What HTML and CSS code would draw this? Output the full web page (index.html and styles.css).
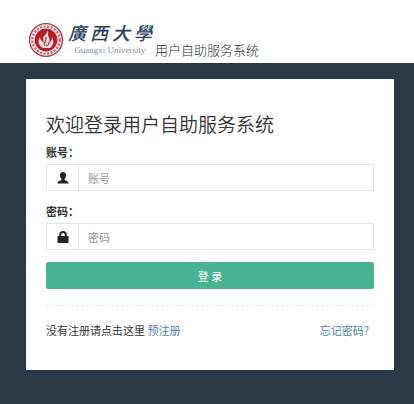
FILE: index.html
```html
<!DOCTYPE html>
<html lang="zh-CN">
<head>
  <meta charset="UTF-8">
  <meta name="viewport" content="width=device-width, initial-scale=1.0">
  <title>用户自助服务系统</title>
  <link rel="stylesheet" href="styles.css">
</head>
<body>
  <header class="header">
    <svg class="seal" viewBox="0 0 36 36" aria-hidden="true">
      <circle cx="18" cy="18" r="16.4" fill="#fff" stroke="#c0303a" stroke-width="1.4"/>
      <circle cx="18" cy="18" r="13.6" fill="none" stroke="#cf6068" stroke-width="2.4" stroke-dasharray="2.2 1.4"/>
      <circle cx="18" cy="18" r="11.4" fill="#b91c28"/>
      <path d="M19 8c2 3-4 5-4 9 0 2 1 3 2 4-3-1-5-3-5-6-3 5-1 9 3 11h7c4-3 4-7 2-11 0 3-1 5-3 6 2-4-1-6-1-8 0-2 1-3-1-5z" fill="#f6dcdc"/>
      <path d="M18 15c1 3-3 5-1 9M21 20c0 3-2 4-3 4" fill="none" stroke="#b91c28" stroke-width="1.1"/>
    </svg>
    <div class="school">
      <div class="school-name"><span>廣</span><span>西</span><span>大</span><span>學</span></div>
      <div class="school-en">Guangxi University</div>
    </div>
    <span class="system-name">用户自助服务系统</span>
  </header>

  <main class="card">
    <h1>欢迎登录用户自助服务系统</h1>
    <form>
      <label for="account">账号：</label>
      <div class="input-group">
        <span class="addon">
          <svg viewBox="0 0 12 12" aria-hidden="true"><path d="M6 0C4 0 3 1.300 3 3.200c0 1.600.6 2.800 1.400 3.600v1.100C3.200 8.600.4 9 .3 11.500h11.400C11.600 9 8.800 8.600 7.600 7.900V6.800C8.400 6 9 4.800 9 3.200 9 1.300 8 0 6 0z"/></svg>
        </span>
        <input type="text" id="account" placeholder="账号">
      </div>
      <label for="password">密码：</label>
      <div class="input-group">
        <span class="addon">
          <svg viewBox="0 0 12 12" aria-hidden="true"><path fill-rule="evenodd" d="M.5 5h1.700V3.800a3.800 3.800 0 0 1 7.600 0V5h1.700v7H.5zM4.200 5h3.600V3.800a1.800 1.800 0 0 0-3.600 0z"/></svg>
        </span>
        <input type="password" id="password" placeholder="密码">
      </div>
      <button type="submit" class="login-btn">登 录</button>
    </form>
    <div class="links">
      <span>没有注册请点击这里 <a href="#">预注册</a></span>
      <a href="#" class="forgot">忘记密码?</a>
    </div>
  </main>
</body>
</html>
```
FILE: styles.css
```css
* {
  margin: 0;
  padding: 0;
  box-sizing: border-box;
}

body {
  min-height: 100vh;
  background-color: #2b3848;
  color: #333;
  font-family: "Noto Sans CJK SC", sans-serif;
  font-size: 11px;
  line-height: 16px;
}

a {
  color: #4a7fb0;
  text-decoration: none;
}

/* 顶部 */
.header {
  display: flex;
  align-items: flex-end;
  height: 63px;
  padding: 0 28px 5px;
  background-color: #fff;
}

.seal {
  width: 36px;
  height: 36px;
}

.school {
  width: 84px;
  margin: 0 3px 2px 4px;
}

.school-name {
  display: flex;
  justify-content: space-between;
  color: #29415f;
  font-family: "Noto Sans CJK TC", serif;
  font-size: 18px;
  font-style: italic;
  font-weight: 500;
  line-height: 24px;
}

.school-en {
  color: #8b8f96;
  font-family: "Liberation Serif", serif;
  font-size: 9px;
  line-height: 12px;
  text-align: center;
}

.system-name {
  font-size: 13px;
  font-weight: 300;
}

/* 登录框 */
.card {
  margin: 16px 20px 32px 26px;
  padding: 32px 20px;
  background-color: #fff;
}

h1 {
  margin-bottom: 7px;
  font-size: 19px;
  font-weight: 350;
  line-height: 26px;
}

label {
  display: block;
  margin-bottom: 4px;
  font-weight: bold;
}

.input-group {
  display: flex;
  height: 27px;
  margin-bottom: 12px;
  border: 1px solid #e5e6e7;
}

.addon {
  display: flex;
  align-items: center;
  justify-content: center;
  width: 32px;
  border-right: 1px solid #e5e6e7;
}

.addon svg {
  width: 12px;
  height: 12px;
  fill: #222;
}

.input-group input {
  flex: 1;
  min-width: 0;
  padding: 0 9px;
  border: none;
  outline: none;
  background: none;
  font-family: inherit;
  font-size: 11px;
}

.input-group input::placeholder {
  color: #999;
}

.login-btn {
  display: block;
  width: 100%;
  height: 27px;
  border: none;
  border-radius: 2px;
  background-color: #48b293;
  color: #fff;
  font-family: inherit;
  font-size: 11px;
  cursor: pointer;
}

.links {
  display: flex;
  justify-content: space-between;
  margin-top: 16px;
  padding-top: 16px;
  border-top: 1px dashed #e7eaec;
}

.forgot {
  margin-right: 5px;
}
```
